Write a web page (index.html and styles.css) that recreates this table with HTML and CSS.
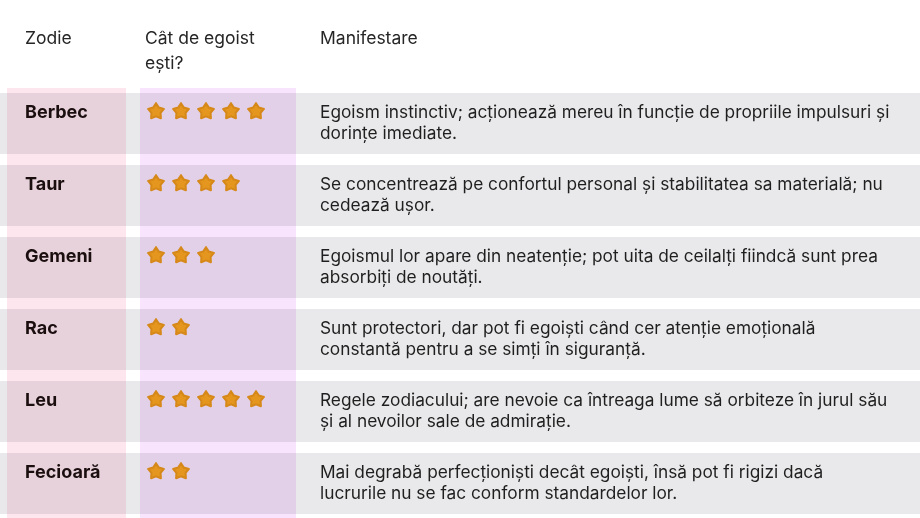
FILE: index.html
```html
<!DOCTYPE html>
<html lang="ro">
<head>
<meta charset="utf-8">
<title>Zodii egoiste</title>
<link rel="stylesheet" href="styles.css">
</head>
<body>
<svg width="0" height="0" class="defs" aria-hidden="true">
  <defs>
    <symbol id="star" viewBox="0 0 24 24">
      <path d="M12 2.6L15.41 7.91 21.51 9.51 17.52 14.39 17.88 20.69 12 18.4 6.12 20.69 6.48 14.39 2.49 9.51 8.59 7.91z" fill="#eba81e" stroke="#dc9818" stroke-width="2.4" stroke-linejoin="round"/>
    </symbol>
  </defs>
</svg>
<div class="table">
  <div class="hl hl-sign"></div>
  <div class="hl hl-score"></div>
  <div class="head">
    <div class="c1">Zodie</div>
    <div class="c2">Cât de egoist<br>ești?</div>
    <div class="c3">Manifestare</div>
  </div>
  <div class="rows">
    <div class="row">
      <div class="c1 name">Berbec</div>
      <div class="c2 stars"><svg><use href="#star"/></svg><svg><use href="#star"/></svg><svg><use href="#star"/></svg><svg><use href="#star"/></svg><svg><use href="#star"/></svg></div>
      <div class="c3">Egoism instinctiv; acționează mereu în funcție de propriile impulsuri și<br>dorințe imediate.</div>
    </div>
    <div class="row">
      <div class="c1 name">Taur</div>
      <div class="c2 stars"><svg><use href="#star"/></svg><svg><use href="#star"/></svg><svg><use href="#star"/></svg><svg><use href="#star"/></svg></div>
      <div class="c3">Se concentrează pe confortul personal și stabilitatea sa materială; nu<br>cedează ușor.</div>
    </div>
    <div class="row">
      <div class="c1 name">Gemeni</div>
      <div class="c2 stars"><svg><use href="#star"/></svg><svg><use href="#star"/></svg><svg><use href="#star"/></svg></div>
      <div class="c3">Egoismul lor apare din neatenție; pot uita de ceilalți fiindcă sunt prea<br>absorbiți de noutăți.</div>
    </div>
    <div class="row">
      <div class="c1 name">Rac</div>
      <div class="c2 stars"><svg><use href="#star"/></svg><svg><use href="#star"/></svg></div>
      <div class="c3">Sunt protectori, dar pot fi egoiști când cer atenție emoțională<br>constantă pentru a se simți în siguranță.</div>
    </div>
    <div class="row">
      <div class="c1 name">Leu</div>
      <div class="c2 stars"><svg><use href="#star"/></svg><svg><use href="#star"/></svg><svg><use href="#star"/></svg><svg><use href="#star"/></svg><svg><use href="#star"/></svg></div>
      <div class="c3">Regele zodiacului; are nevoie ca întreaga lume să orbiteze în jurul său<br>și al nevoilor sale de admirație.</div>
    </div>
    <div class="row">
      <div class="c1 name">Fecioară</div>
      <div class="c2 stars"><svg><use href="#star"/></svg><svg><use href="#star"/></svg></div>
      <div class="c3">Mai degrabă perfecționiști decât egoiști, însă pot fi rigizi dacă<br>lucrurile nu se fac conform standardelor lor.</div>
    </div>
  </div>
</div>
</body>
</html>
```

FILE: styles.css
```css
html, body {
  margin: 0;
  padding: 0;
  background: #ffffff;
}
body {
  width: 920px;
  height: 518px;
  overflow: hidden;
  font-family: "Inter", "Liberation Sans", sans-serif;
  font-size: 17.3px;
  color: #1f1f1f;
}
.defs {
  position: absolute;
  width: 0;
  height: 0;
}
.table {
  position: relative;
  padding-top: 25px;
}
.head,
.row {
  display: grid;
  grid-template-columns: 126px 170px 1fr;
}
.head {
  line-height: 25px;
  height: 63px;
  font-size: 17.5px;
  color: #262626;
}
.c1 { padding-left: 25px; }
.c2 { padding-left: 19px; }
.c3 { padding-left: 24px; }
.rows {
  margin-top: 5px;
  display: flex;
  flex-direction: column;
  gap: 11px;
}
.row {
  background: #e9e9eb;
  height: 61px;
  box-sizing: border-box;
  padding-top: 8px;
  line-height: 21px;
}
.name {
  font-weight: 700;
  font-size: 18px;
  color: #1a0f10;
}
.stars {
  padding-left: 20px;
  display: flex;
  gap: 5px;
  padding-top: 0;
}
.stars svg {
  width: 20px;
  height: 20px;
}
.hl {
  position: absolute;
  top: 88px;
  bottom: -20px;
  mix-blend-mode: multiply;
  z-index: 2;
  pointer-events: none;
}
.hl-sign {
  left: 7px;
  width: 119px;
  background: #fde6ee;
}
.hl-score {
  left: 140px;
  width: 156px;
  background: #f8e4fd;
}
```
